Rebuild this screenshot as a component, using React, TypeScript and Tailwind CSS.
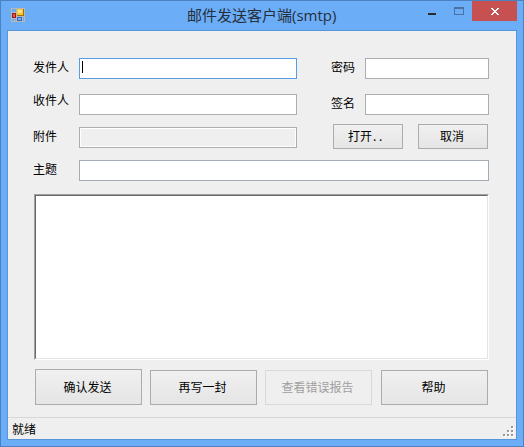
interface FieldProps {
  label: string;
  labelClass: string;
  boxClass: string;
  focused?: boolean;
}

interface PushButtonProps {
  label: string;
  className: string;
  textClass?: string;
  disabled?: boolean;
}

const Field = ({ label, labelClass, boxClass, focused }: FieldProps) => (
  <label className="flex items-start">
    <span className={`shrink-0 whitespace-nowrap leading-[14px] ${labelClass}`}>
      {label}
    </span>
    <span className={`block h-[21px] border ${boxClass}`}>
      {focused && <span className="mt-[2px] ml-[2px] block h-3 w-px bg-black" />}
    </span>
  </label>
);

const PushButton = ({
  label,
  className,
  textClass = "",
  disabled = false,
}: PushButtonProps) => (
  <button
    disabled={disabled}
    className={`flex items-center justify-center whitespace-nowrap border leading-[14px] ${
      disabled
        ? "border-[#d9d9d9] bg-[#efefef] text-[#a0a0a0]"
        : "border-[#acacac] bg-linear-to-b from-[#f0f0f0] to-[#e5e5e5] text-black"
    } ${className}`}
  >
    <span className={textClass}>{label}</span>
  </button>
);

const AppIcon = () => (
  <svg width="14" height="14" viewBox="0 0 14 14" shapeRendering="crispEdges">
    <path fill="#b9b9b5" d="M0 0h14v14H0z" />
    <path fill="#6ba9f3" d="M1 1h4v3H1zM1 11h2v2H1zM4 11h1v2H4zM12 9h1v4h-1z" />
    <path fill="#9b1c1c" d="M1 5h4v5H1z" />
    <path fill="#e0564c" d="M2 6h2v3H2z" />
    <path fill="#a06f08" d="M6 1h7v7H6z" />
    <path fill="#f7c62d" d="M6 1h6v6H6z" />
    <path fill="#ffe58a" d="M7 2h4v3H7z" />
    <path fill="#3565cf" d="M6 9h5v4H6z" />
    <path fill="#83adf5" d="M7 10h3v2H7z" />
  </svg>
);

const TitleBar = () => (
  <header className="flex h-[29px] items-start">
    <div className="mt-[7px] ml-[10px] h-[14px] w-[14px] shrink-0">
      <AppIcon />
    </div>
    <h1 className="mt-1 ml-[162px] w-[241px] whitespace-nowrap font-['Open_Sans','Noto_Sans_CJK_SC',sans-serif] text-[15px] leading-5 text-[#262f3d]">
      邮件发送客户端(smtp)
    </h1>
    <div className="mt-3 h-[2px] w-2 shrink-0 bg-[#2b2b2b]" />
    <div className="mt-[6px] ml-[18px] h-2 w-[10px] shrink-0 border border-t-2 border-[#4b72a0]" />
    <button className="ml-2 flex h-5 w-[45px] shrink-0 justify-center bg-[#c75050]">
      <svg
        className="mt-[7px] ml-[1px]"
        width="8"
        height="7"
        viewBox="0 0 8 7"
        shapeRendering="crispEdges"
      >
        <path
          fill="#fff"
          d="M0 0h2v1H0zM6 0h2v1H6zM1 1h2v1H1zM5 1h2v1H5zM2 2h4v1H2zM3 3h2v1H3zM2 4h4v1H2zM1 5h2v1H1zM5 5h2v1H5zM0 6h2v1H0zM6 6h2v1H6z"
        />
      </svg>
    </button>
  </header>
);

const StatusBar = () => (
  <footer className="mt-3 flex h-[22px] justify-between border-t border-[#d7d7d7] pl-1">
    <span className="mt-1 leading-[14px]">就绪</span>
    <svg
      className="mt-2 mr-[2px]"
      width="11"
      height="11"
      viewBox="0 0 11 11"
      shapeRendering="crispEdges"
    >
      <path
        fill="#fff"
        d="M9 1h2v2H9zM9 5h2v2H9zM9 9h2v2H9zM5 5h2v2H5zM5 9h2v2H5zM1 9h2v2H1z"
      />
      <path
        fill="#999"
        d="M8 0h2v2H8zM8 4h2v2H8zM8 8h2v2H8zM4 4h2v2H4zM4 8h2v2H4zM0 8h2v2H0z"
      />
    </svg>
  </footer>
);

export default function App() {
  return (
    <div className="h-[447px] w-[524px] overflow-hidden border border-[#4b82bf] bg-[#6badf6] font-['Noto_Sans_CJK_SC',sans-serif] text-[12px] text-black">
      <TitleBar />
      <main className="ml-[6px] h-[410px] w-[510px] border border-[#5795d8] bg-[#efefef]">
        <form className="flex flex-col pt-[27px] pl-[25px]">
          <div className="flex h-[21px] gap-[34px]">
            <Field
              label="发件人"
              labelClass="w-[46px] mt-[2px]"
              boxClass="w-[218px] border-[#569de5] bg-white"
              focused
            />
            <Field
              label="密码"
              labelClass="w-[34px] mt-[2px]"
              boxClass="w-[124px] border-[#abadb3] bg-white"
            />
          </div>

          <div className="mt-[15px] flex h-[21px] gap-[34px]">
            <Field
              label="收件人"
              labelClass="w-[46px] -mt-px"
              boxClass="w-[218px] border-[#abadb3] bg-white"
            />
            <Field
              label="签名"
              labelClass="w-[34px] mt-[2px]"
              boxClass="w-[124px] border-[#abadb3] bg-white"
            />
          </div>

          <div className="mt-[9px] flex h-[25px] items-start">
            <div className="mt-[3px]">
              <Field
                label="附件"
                labelClass="w-[46px] mt-[2px]"
                boxClass="w-[218px] border-[#abadb3] bg-[#efefef] shadow-[inset_0_0_0_1px_#fff]"
              />
            </div>
            <button className="ml-9 flex h-[25px] w-[70px] items-center border border-[#acacac] bg-linear-to-b from-[#f0f0f0] to-[#e5e5e5] pb-[2px] pl-[14px] leading-[14px]">
              打开<span className="pl-px tracking-[2.7px]">..</span>
            </button>
            <PushButton
              label="取消"
              className="ml-[15px] h-[25px] w-[70px]"
              textClass="pr-[2px] pb-[2px]"
            />
          </div>

          <div className="mt-[11px] flex h-[21px]">
            <Field
              label="主题"
              labelClass="w-[46px] mt-[2px]"
              boxClass="w-[410px] border-[#a5acb5] bg-white"
            />
          </div>

          {/* Sunken message box */}
          <div className="mt-[13px] ml-px h-[166px] w-[455px] border border-t-[#a0a0a0] border-r-white border-b-white border-l-[#a0a0a0]">
            <div className="h-full border border-t-[#696969] border-r-[#e3e3e3] border-b-[#e3e3e3] border-l-[#696969] bg-white" />
          </div>

          <div className="mt-[9px] ml-[2px] flex h-9 items-end">
            <PushButton
              label="确认发送"
              className="h-9 w-[107px]"
              textClass="pr-[2px]"
            />
            <PushButton
              label="再写一封"
              className="ml-2 h-[35px] w-[107px] pb-[2px]"
              textClass="pr-[2px]"
            />
            <PushButton
              label="查看错误报告"
              className="ml-2 h-[35px] w-[107px] pb-[2px]"
              textClass="pr-[2px]"
              disabled
            />
            <PushButton
              label="帮助"
              className="ml-[9px] h-[35px] w-[107px] pb-[2px]"
              textClass="pr-[2px]"
            />
          </div>
        </form>
        <StatusBar />
      </main>
    </div>
  );
}
